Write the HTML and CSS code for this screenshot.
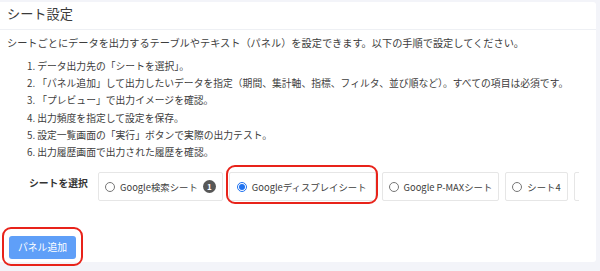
FILE: index.html
```html
<!DOCTYPE html>
<html lang="ja">
<head>
<meta charset="utf-8">
<title>シート設定</title>
<link rel="stylesheet" href="styles.css">
</head>
<body>
<section class="card">
  <header class="card-header">シート設定</header>
  <div class="card-body">
    <p class="intro">シートごとにデータを出力するテーブルやテキスト（パネル）を設定できます。以下の手順で設定してください。</p>
    <ol class="steps">
      <li>データ出力先の「シートを選択」。</li>
      <li>「パネル追加」して出力したいデータを指定（期間、集計軸、指標、フィルタ、並び順など）。すべての項目は必須です。</li>
      <li>「プレビュー」で出力イメージを確認。</li>
      <li>出力頻度を指定して設定を保存。</li>
      <li>設定一覧画面の「実行」ボタンで実際の出力テスト。</li>
      <li>出力履歴画面で出力された履歴を確認。</li>
    </ol>
    <div class="sheet-row">
      <div class="sheet-label">シートを選択</div>
      <div class="sheet-options">
        <label class="opt"><input type="radio" name="sheet"><span>Google検索シート</span><span class="badge">1</span></label>
        <label class="opt opt-selected"><input type="radio" name="sheet" checked><span>Googleディスプレイシート</span></label>
        <label class="opt"><input type="radio" name="sheet"><span>Google P-MAXシート</span></label>
        <label class="opt"><input type="radio" name="sheet"><span>シート4</span></label>
        <label class="opt"><input type="radio" name="sheet"><span>シート5</span></label>
      </div>
    </div>
    <div class="actions">
      <button class="btn-add" type="button">パネル追加</button>
    </div>
  </div>
</section>
</body>
</html>
```

FILE: styles.css
```css
html, body {
  margin: 0;
  padding: 0;
}
body {
  background: #f3f4f9;
  font-family: "Noto Sans CJK JP", "Noto Sans", sans-serif;
  color: #3d3d3d;
  width: 600px;
  height: 271px;
  overflow: hidden;
}
.card {
  margin: 2px 4px 0 0;
  background: #ffffff;
  border-radius: 0 3px 3px 0;
  height: 260px;
  box-sizing: border-box;
}
.card-header {
  height: 27px;
  line-height: 24px;
  padding-left: 7px;
  font-size: 13.2px;
  color: #3a3a3a;
  border-bottom: 1px solid #eef0f4;
}
.card-body {
  padding: 5px 7px 7px 7px;
}
.intro {
  margin: 0;
  font-size: 10.2px;
  line-height: 16px;
}
.steps {
  list-style: none;
  counter-reset: step;
  margin: 7px 0 0 0;
  padding: 0 0 0 20px;
  font-size: 9.8px;
  line-height: 17.2px;
}
.steps li {
  counter-increment: step;
  white-space: nowrap;
}
.steps li::before {
  content: counter(step) ".";
  margin-right: 2px;
}
.sheet-row {
  display: flex;
  align-items: flex-start;
  margin-top: 11px;
  padding-left: 22px;
}
.sheet-label {
  flex: 0 0 69px;
  font-size: 9.8px;
  font-weight: 700;
  line-height: 16px;
  padding-top: 3px;
  color: #333;
}
.sheet-options {
  display: flex;
  gap: 6px;
  width: 481px;
  overflow-x: clip;
  overflow-y: visible;
}
.opt {
  position: relative;
  flex: 0 0 auto;
  display: flex;
  align-items: center;
  gap: 4px;
  height: 29px;
  box-sizing: border-box;
  padding: 0 6px 0 6px;
  border: 1px solid #e6e6e6;
  border-radius: 2px;
  font-size: 9.4px;
  color: #3d3d3d;
  white-space: nowrap;
}
.opt input {
  width: 10px;
  height: 10px;
  margin: 0 1px 0 0;
  accent-color: #1f72f0;
}
.opt-selected {
  padding: 0 8px 0 7px;
}
.opt-selected::after {
  content: "";
  position: absolute;
  top: -8px;
  left: -4px;
  right: -3px;
  bottom: -4px;
  border: 2.5px solid #e8231a;
  border-radius: 9px;
  pointer-events: none;
}
.badge {
  display: inline-flex;
  align-items: center;
  justify-content: center;
  width: 13px;
  height: 13px;
  margin-left: 1px;
  border-radius: 50%;
  background: #575757;
  color: #fff;
  font-size: 8px;
  font-weight: 700;
}
.actions {
  margin-top: 31px;
  padding-left: 2px;
}
.btn-add {
  position: relative;
  width: 67px;
  height: 23px;
  padding: 0;
  border: none;
  border-radius: 3px;
  background: #5f9ff8;
  color: #ffffff;
  font-family: inherit;
  font-size: 9.8px;
  cursor: pointer;
}
.btn-add::after {
  content: "";
  position: absolute;
  top: -9px;
  left: -7px;
  right: -7px;
  bottom: -7px;
  border: 2.5px solid #e8231a;
  border-radius: 9px;
  pointer-events: none;
}
```
